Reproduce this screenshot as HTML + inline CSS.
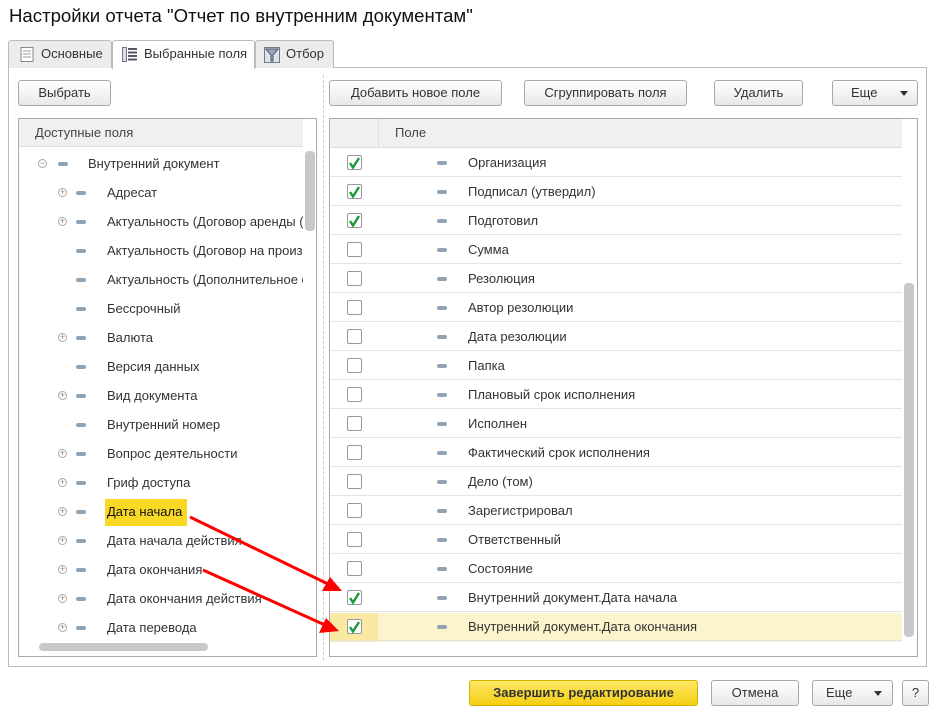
<!DOCTYPE html>
<html><head><meta charset="utf-8"><style>
*{box-sizing:border-box;margin:0;padding:0}
body{width:941px;height:706px;background:#fff;font-family:"Liberation Sans",Arial,sans-serif;font-size:13px;color:#333;position:relative;overflow:hidden}
.a{position:absolute}
.btn{position:absolute;height:26px;border:1px solid #a8a8a8;border-radius:3px;background:linear-gradient(#fff,#e8e8e8);text-align:center;line-height:24px;color:#333;font-size:13px}
.tab{position:absolute;top:40px;height:28px;border:1px solid #bbb;border-bottom:none;border-radius:3px 3px 0 0;background:#ececec;line-height:26px;font-size:13px;color:#333}
.row{position:absolute;height:29px;line-height:30px;white-space:nowrap}
.dash{position:absolute;width:10px;height:4px;border-radius:2px;background:#8fa3b5;top:13px}
.pl{position:absolute;width:9px;height:9px;border:1px solid #aaa;border-radius:50%;top:10px;font-size:9px;line-height:7px;text-align:center;color:#888}
.cb{position:absolute;left:17px;top:7px;width:15px;height:15px;border:1px solid #999;border-radius:2px;background:#fff}
.rr{position:absolute;left:0;width:572px;height:29px;border-bottom:1px solid #e4e4e4}
</style></head><body>
<div class="a" style="left:9px;top:5px;font-size:18.6px;color:#111">Настройки отчета "Отчет по внутренним документам"</div>

<div class="a" style="left:8px;top:67px;width:919px;height:600px;border:1px solid #bbb"></div>
<div class="tab" style="left:8px;width:104px;padding-left:32px">Основные
<svg class="a" style="left:11px;top:6px" width="14" height="15"><rect x="1" y="0.5" width="12" height="14" fill="#fff" stroke="#888"/><path d="M3 4h8M3 7h8M3 10h8" stroke="#999"/></svg></div>
<div class="tab" style="left:112px;width:143px;background:#fff;height:29px;padding-left:31px">Выбранные поля
<svg class="a" style="left:9px;top:6px" width="16" height="15"><rect x="0.5" y="0.5" width="4" height="14" fill="#dde" stroke="#778"/><path d="M6 2h9M6 5.5h9M6 9h9M6 12.5h9" stroke="#556" stroke-width="2"/></svg></div>
<div class="tab" style="left:255px;width:79px;padding-left:30px">Отбор
<svg class="a" style="left:8px;top:6px" width="16" height="16"><rect x="0.5" y="0.5" width="15" height="15" fill="#dde4ee" stroke="#778"/><path d="M2 2h12l-5 6v6h-2v-6z" fill="#9ab" stroke="#556"/></svg></div>

<div class="btn" style="left:18px;top:80px;width:93px">Выбрать</div>

<div class="a" style="left:323px;top:75px;height:585px;border-left:1px dashed #ccc"></div>

<!-- left list -->
<div class="a" style="left:18px;top:118px;width:299px;height:539px;border:1px solid #aaa;overflow:hidden">
<div class="a" style="left:0;top:0;width:284px;height:28px;background:#f0f0f0;border-bottom:1px solid #ddd;line-height:28px;padding-left:16px;color:#444">Доступные поля</div>
<div class="a" style="left:286px;top:32px;width:10px;height:80px;background:#c8c8c8;border-radius:4px"></div>
<div class="a" style="left:20px;top:524px;width:169px;height:8px;background:#c8c8c8;border-radius:4px"></div>
<div class="a" style="left:86px;top:380px;width:82px;height:27px;background:#f9d923"></div>
<div class="row" style="top:30px;left:0;width:284px"><span class="pl" style="left:19px">−</span><span class="dash" style="left:39px"></span><span class="a" style="left:69px">Внутренний документ</span></div>
<div style="position:absolute;left:0;top:59px;width:284px;overflow:hidden;height:460px">
<div class="row" style="top:0"><span class="pl" style="left:39px">+</span><span class="dash" style="left:57px"></span><span class="a" style="left:88px">Адресат</span></div>
<div class="row" style="top:29px"><span class="pl" style="left:39px">+</span><span class="dash" style="left:57px"></span><span class="a" style="left:88px">Актуальность (Договор аренды (</span></div>
<div class="row" style="top:58px"><span class="dash" style="left:57px"></span><span class="a" style="left:88px">Актуальность (Договор на произ</span></div>
<div class="row" style="top:87px"><span class="dash" style="left:57px"></span><span class="a" style="left:88px">Актуальность (Дополнительное с</span></div>
<div class="row" style="top:116px"><span class="dash" style="left:57px"></span><span class="a" style="left:88px">Бессрочный</span></div>
<div class="row" style="top:145px"><span class="pl" style="left:39px">+</span><span class="dash" style="left:57px"></span><span class="a" style="left:88px">Валюта</span></div>
<div class="row" style="top:174px"><span class="dash" style="left:57px"></span><span class="a" style="left:88px">Версия данных</span></div>
<div class="row" style="top:203px"><span class="pl" style="left:39px">+</span><span class="dash" style="left:57px"></span><span class="a" style="left:88px">Вид документа</span></div>
<div class="row" style="top:232px"><span class="dash" style="left:57px"></span><span class="a" style="left:88px">Внутренний номер</span></div>
<div class="row" style="top:261px"><span class="pl" style="left:39px">+</span><span class="dash" style="left:57px"></span><span class="a" style="left:88px">Вопрос деятельности</span></div>
<div class="row" style="top:290px"><span class="pl" style="left:39px">+</span><span class="dash" style="left:57px"></span><span class="a" style="left:88px">Гриф доступа</span></div>
<div class="row" style="top:319px"><span class="pl" style="left:39px">+</span><span class="dash" style="left:57px"></span><span class="a" style="left:88px;color:#111">Дата начала</span></div>
<div class="row" style="top:348px"><span class="pl" style="left:39px">+</span><span class="dash" style="left:57px"></span><span class="a" style="left:88px">Дата начала действия</span></div>
<div class="row" style="top:377px"><span class="pl" style="left:39px">+</span><span class="dash" style="left:57px"></span><span class="a" style="left:88px">Дата окончания</span></div>
<div class="row" style="top:406px"><span class="pl" style="left:39px">+</span><span class="dash" style="left:57px"></span><span class="a" style="left:88px">Дата окончания действия</span></div>
<div class="row" style="top:435px"><span class="pl" style="left:39px">+</span><span class="dash" style="left:57px"></span><span class="a" style="left:88px">Дата перевода</span></div>
</div>
</div>

<!-- right buttons -->
<div class="btn" style="left:329px;top:80px;width:173px">Добавить новое поле</div>
<div class="btn" style="left:524px;top:80px;width:163px">Сгруппировать поля</div>
<div class="btn" style="left:714px;top:80px;width:89px">Удалить</div>
<div class="btn" style="left:832px;top:80px;width:86px;text-align:left;padding-left:18px">Еще<span class="a" style="left:67px;top:10px;border:4px solid transparent;border-top:5px solid #333"></span></div>

<!-- right table -->
<div class="a" style="left:329px;top:118px;width:589px;height:539px;border:1px solid #aaa;overflow:hidden">
<div class="a" style="left:0;top:0;width:572px;height:29px;background:#f0f0f0;border-bottom:1px solid #ddd"></div>
<div class="a" style="left:48px;top:0;height:29px;border-left:1px solid #ddd"></div>
<div class="a" style="left:65px;top:0;line-height:28px;color:#444">Поле</div>
<div class="a" style="left:574px;top:164px;width:10px;height:354px;background:#c8c8c8;border-radius:4px"></div>
<div class="a" style="left:0;top:494px;width:572px;height:29px;background:#fcf4cc"></div>
<div class="a" style="left:0;top:494px;width:48px;height:29px;background:#f9e9a3"></div>
<div id="rows"></div>
</div>

<div class="btn" style="left:469px;top:680px;width:229px;background:linear-gradient(#fde765,#f5cf12);border-color:#d8b000;font-weight:bold;color:#333">Завершить редактирование</div>
<div class="btn" style="left:711px;top:680px;width:88px">Отмена</div>
<div class="btn" style="left:812px;top:680px;width:81px;text-align:left;padding-left:13px">Еще<span class="a" style="left:61px;top:10px;border:4px solid transparent;border-top:5px solid #333"></span></div>
<div class="btn" style="left:902px;top:680px;width:27px">?</div>

<svg class="a" style="left:0;top:0" width="941" height="706">
<line x1="190" y1="517" x2="328" y2="584" stroke="#f00" stroke-width="3"/>
<polygon points="342,591 322,591 330,577" fill="#f00"/>
<line x1="203" y1="570" x2="325" y2="625" stroke="#f00" stroke-width="3"/>
<polygon points="339,631 319,633 326,618" fill="#f00"/>
</svg>

<script>
var t=["Организация","Подписал (утвердил)","Подготовил","Сумма","Резолюция","Автор резолюции","Дата резолюции","Папка","Плановый срок исполнения","Исполнен","Фактический срок исполнения","Дело (том)","Зарегистрировал","Ответственный","Состояние","Внутренний документ.Дата начала","Внутренний документ.Дата окончания"];
var ch=[1,1,1,0,0,0,0,0,0,0,0,0,0,0,0,1,1];
var h="";
t.forEach(function(s,i){var y=29+i*29;
h+='<div class="rr" style="top:'+y+'px"></div><div class="row" style="top:'+y+'px;left:0;width:572px"><span class="cb"></span>'+(ch[i]?'<svg class="a" style="left:17px;top:7px" width="15" height="15"><path d="M3 8l3 4.5L12 3" fill="none" stroke="#1a9a3a" stroke-width="2.4"/></svg>':'')+'<span class="dash" style="left:107px"></span><span class="a" style="left:138px">'+s+'</span></div>';});
document.getElementById("rows").innerHTML=h;
</script>
</body></html>
